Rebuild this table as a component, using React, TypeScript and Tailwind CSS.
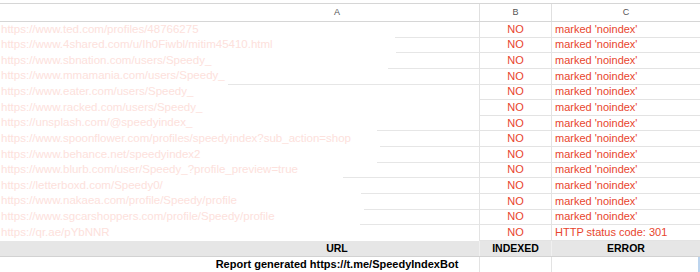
const rows: { url: string; line: number | null; error: string }[] = [
  { url: "https://www.ted.com/profiles/48766275", line: 395, error: "marked 'noindex'" },
  { url: "https://www.4shared.com/u/Ih0Fiwbl/mitim45410.html", line: 396, error: "marked 'noindex'" },
  { url: "https://www.sbnation.com/users/Speedy_", line: 388, error: "marked 'noindex'" },
  { url: "https://www.mmamania.com/users/Speedy_", line: 228, error: "marked 'noindex'" },
  { url: "https://www.eater.com/users/Speedy_", line: null, error: "marked 'noindex'" },
  { url: "https://www.racked.com/users/Speedy_", line: null, error: "marked 'noindex'" },
  { url: "https://unsplash.com/@speedyindex_", line: 377, error: "marked 'noindex'" },
  { url: "https://www.spoonflower.com/profiles/speedyindex?sub_action=shop", line: 380, error: "marked 'noindex'" },
  { url: "https://www.behance.net/speedyindex2", line: 377, error: "marked 'noindex'" },
  { url: "https://www.blurb.com/user/Speedy_?profile_preview=true", line: 343, error: "marked 'noindex'" },
  { url: "https://letterboxd.com/Speedy0/", line: 361, error: "marked 'noindex'" },
  { url: "https://www.nakaea.com/profile/Speedy/profile", line: 364, error: "marked 'noindex'" },
  { url: "https://www.sgcarshoppers.com/profile/Speedy/profile", line: 360, error: "marked 'noindex'" },
  { url: "https://qr.ae/pYbNNR", line: null, error: "HTTP status code: 301" },
];

const cols = "grid grid-cols-[479px_72px_149px]";

export default function App() {
  return (
    <div
      className="w-[700px] h-[272px] bg-white overflow-hidden pt-[3px] text-[11px] leading-none"
      style={{ fontFamily: '"Liberation Sans", Arial, sans-serif' }}
    >
      <div className={`${cols} h-[19px] border-t border-b border-[#d6d6d6] text-[9px] text-[#555]`}>
        <div className="flex items-center justify-center pl-[195px]">A</div>
        <div className="flex items-center justify-center border-l border-[#e0e0e0]">B</div>
        <div className="flex items-center justify-center border-l border-[#e0e0e0]">C</div>
      </div>

      {rows.map((r, i) => (
        <div key={i} className={`${cols} h-[15.64px]`}>
          <div className="flex flex-col min-w-0">
            <div className="flex-1 flex items-center pl-[1px] text-[11.5px] text-[#fde1dc] whitespace-nowrap">
              {r.url}
            </div>
            {r.line !== null && i < rows.length - 1 ? (
              <div className="h-px bg-[#e6e6e6]" style={{ marginLeft: r.line }} />
            ) : (
              <div className="h-px" />
            )}
          </div>
          <div className="flex items-center justify-center border-l border-b border-[#e3e3e3] text-[#e8452e]">
            NO
          </div>
          <div className="flex items-center pl-[3px] border-l border-b border-[#e3e3e3] text-[#e8452e] whitespace-nowrap">
            {r.error}
          </div>
        </div>
      ))}

      <div className={`${cols} h-[16px] bg-[#e6e6e6] border-b border-[#d2d2d2] font-bold text-[10.5px] text-black`}>
        <div className="flex items-center justify-center pl-[195px]">URL</div>
        <div className="flex items-center justify-center border-l border-[#f0f0f0]">INDEXED</div>
        <div className="flex items-center justify-center border-l border-[#f0f0f0]">ERROR</div>
      </div>

      <div className={`${cols} h-[15px] font-bold text-[11px] text-black`}>
        <div className="flex items-center justify-center pl-[195px] whitespace-nowrap">
          Report generated https://t.me/SpeedyIndexBot
        </div>
        <div className="border-l border-[#e3e3e3]" />
        <div className="border-l border-r-2 border-[#e3e3e3] border-r-[#bcd4ee]" />
      </div>
    </div>
  );
}
